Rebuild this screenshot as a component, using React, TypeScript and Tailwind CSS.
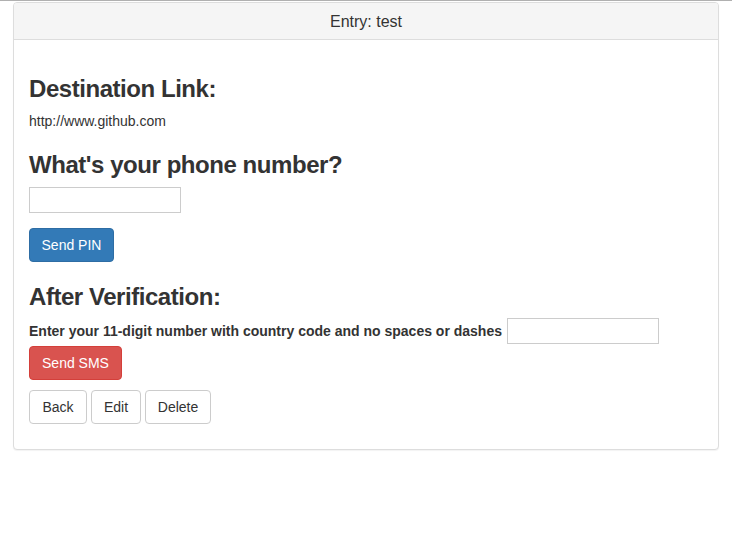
export default function App() {
  const font = { fontFamily: '"Liberation Sans", Arial, sans-serif' };
  return (
    <div className="min-h-[540px] w-[732px] bg-white text-[#333] text-[14px]" style={font}>
      <div className="h-px w-full bg-[#b0b0b0]" />
      <div className="ml-[13px] mt-px w-[706px] rounded-[4px] border border-[#ddd] bg-white shadow-[0_1px_1px_rgba(0,0,0,0.05)]">
        <div className="rounded-t-[3px] border-b border-[#ddd] bg-[#f5f5f5] px-[15px] pt-[11px] pb-[9px] text-center text-[16px] leading-[16px]">
          Entry: test
        </div>
        <div className="px-[15px] pt-[15px] pb-[15px]">
          <h3 className="mt-[20px] mb-[9px] pt-px text-[24px] leading-[26px] font-bold tracking-[-0.45px]">Destination Link:</h3>
          <div className="leading-[20px] text-[14px]">http://www.github.com</div>
          <h3 className="mt-[20px] mb-[9px] pt-px text-[24px] leading-[26px] font-bold tracking-[-0.45px]">What's your phone number?</h3>
          <input className="block h-[26px] w-[152px] border border-[#ccc] bg-white outline-none" />
          <button className="mt-[15px] h-[34px] w-[85px] rounded-[4px] border border-[#2e6da4] bg-[#337ab7] text-[14px] text-white">
            Send PIN
          </button>
          <h3 className="mt-[21px] mb-[8px] pt-px text-[24px] leading-[26px] font-bold tracking-[-0.45px]">After Verification:</h3>
          <div className="flex items-center">
            <span className="font-bold text-[14px] leading-[20px]">Enter your 11-digit number with country code and no spaces or dashes</span>
            <input className="ml-[5px] h-[26px] w-[152px] border border-[#ccc] bg-white outline-none" />
          </div>
          <button className="mt-[2px] block h-[34px] w-[93px] rounded-[4px] border border-[#d43f3a] bg-[#d9534f] text-[14px] text-white">
            Send SMS
          </button>
          <div className="mt-[10px] mb-[10px] flex gap-[4px]">
            <button className="h-[34px] w-[58px] rounded-[4px] border border-[#ccc] bg-white text-[14px] text-[#333]">Back</button>
            <button className="h-[34px] w-[50px] rounded-[4px] border border-[#ccc] bg-white text-[14px] text-[#333]">Edit</button>
            <button className="h-[34px] w-[66px] rounded-[4px] border border-[#ccc] bg-white text-[14px] text-[#333]">Delete</button>
          </div>
        </div>
      </div>
    </div>
  );
}
